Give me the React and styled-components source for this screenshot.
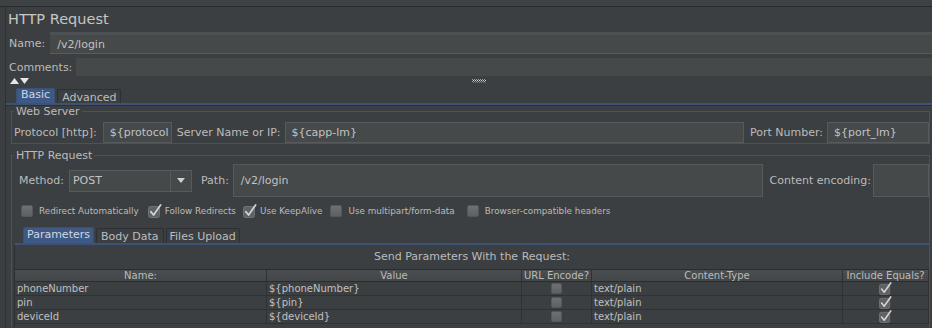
import React from "react";
import styled, { createGlobalStyle } from "styled-components";

const GlobalStyle = createGlobalStyle`
  html, body {
    margin: 0;
    padding: 0;
    background: #3c3f41;
  }
  body {
    font-family: "DejaVu Sans", "Lucida Grande", sans-serif;
    color: #bbbbbb;
  }
`;

const Window = styled.div`
  width: 932px;
  height: 328px;
  overflow: hidden;
  background: #3c3f41;
  display: flex;
  flex-direction: column;
`;

const TopStrip = styled.div`
  flex: none;
  height: 6px;
  background: #3e4245;
  border-bottom: 1px solid #27292b;
`;

const Panel = styled.div`
  flex: 1;
  margin-left: 5px;
  border-left: 1px solid #2f3133;
  display: flex;
  flex-direction: column;
  min-height: 0;
`;

const Title = styled.div`
  height: 25px;
  line-height: 24px;
  padding-left: 2px;
  font-size: 14.5px;
  color: #c6c6c6;
`;

const Row = styled.div`
  display: flex;
  align-items: center;
  flex: none;
  height: ${(p) => p.$h}px;
  margin-top: ${(p) => p.$mt || 0}px;
  padding-left: ${(p) => p.$pl || 0}px;
`;

const Label = styled.span`
  font-size: 11px;
  white-space: nowrap;
  color: #bbbbbb;
  margin-right: ${(p) => p.$mr ?? 5}px;
  margin-left: ${(p) => p.$ml || 0}px;
`;

const Field = styled.div`
  box-sizing: border-box;
  height: ${(p) => p.$h || 21}px;
  ${(p) => (p.$w ? `width: ${p.$w}px; flex: none;` : "flex: 1;")}
  background: #45494a;
  border: 1px solid #575a5c;
  font-size: 11px;
  color: #c2c2c2;
  padding-left: ${(p) => p.$pad ?? 6}px;
  display: flex;
  align-items: center;
  white-space: nowrap;
  overflow: hidden;
`;

const NameField = styled(Field)`
  border-width: 3px 0 1px 0;
  border-color: #4d5153 transparent #585b5d transparent;
  padding-left: 7px;
`;

const CommentsField = styled(Field)`
  border: none;
`;

const ArrowRow = styled.div`
  flex: none;
  height: 10px;
  display: flex;
  align-items: center;
  padding-left: 4px;
`;

const Grip = styled.svg`
  margin-left: 442px;
`;

const Tabs = styled.div`
  flex: none;
  display: flex;
  align-items: flex-end;
  gap: 2px;
  padding-left: ${(p) => p.$pl}px;
  height: ${(p) => p.$h}px;
  margin-top: ${(p) => p.$mt || 0}px;
`;

const Tab = styled.div`
  box-sizing: border-box;
  height: ${(p) => p.$h}px;
  padding: ${(p) => (p.$active ? "0" : "2px")} ${(p) => p.$px}px 0;
  font-size: 11px;
  line-height: ${(p) => p.$h - 3}px;
  color: ${(p) => (p.$active ? "#cfd6e2" : "#bdbdbd")};
  background: ${(p) => (p.$active ? "#3f5985" : "#3c3f41")};
  border: 1px solid ${(p) => (p.$active ? "#3a5078" : "#2d2f31")};
  border-bottom: none;
  border-radius: 2px 2px 0 0;
  white-space: nowrap;
`;

const TabBody = styled.div`
  flex: 1;
  display: flex;
  flex-direction: column;
  border-top: 2px solid #3d5274;
  box-shadow: inset 0 1px 0 #2d3035;
  min-height: 0;
`;

const Group = styled.fieldset`
  margin: ${(p) => p.$mt || 0}px 2px 0 5px;
  padding: 0 0 0 2px;
  border: 1px solid #4f5254;
  border-bottom-color: ${(p) => p.$bb || "#4f5254"};
  min-width: 0;
  display: flex;
  flex-direction: column;
  ${(p) => (p.$grow ? "flex: 1; min-height: 0;" : "")}
`;

const Legend = styled.legend`
  font-size: 11px;
  line-height: 13px;
  padding: 0 2px;
  margin-left: 0;
  color: #bbbbbb;
`;

const Combo = styled.div`
  box-sizing: border-box;
  width: 123px;
  height: 22px;
  flex: none;
  background: #45494a;
  border: 1px solid #575a5c;
  display: flex;
  align-items: stretch;
  font-size: 11px;
`;

const ComboText = styled.div`
  flex: 1;
  display: flex;
  align-items: center;
  padding-left: 3px;
  color: #c4c4c4;
`;

const ComboButton = styled.div`
  width: 20px;
  border-left: 1px solid #575a5c;
  display: flex;
  align-items: center;
  justify-content: center;
`;

const Checks = styled.div`
  flex: none;
  display: flex;
  align-items: center;
  height: 14px;
  margin-top: 7px;
  padding-left: 7px;
`;

const CheckItem = styled.label`
  display: flex;
  align-items: center;
  margin-right: ${(p) => p.$mr}px;
`;

const CheckText = styled.span`
  font-size: 8.8px;
  color: #bbbbbb;
  margin-left: ${(p) => (p.$on ? 3 : 6)}px;
  white-space: nowrap;
`;

const Box = styled.span`
  display: inline-block;
  box-sizing: border-box;
  width: ${(p) => p.$s || 12}px;
  height: ${(p) => p.$s || 12}px;
  border-radius: 2px;
  background: linear-gradient(#6e7173, #5e6163);
  border: 1px solid #55585a;
`;

const ParamsArea = styled.div`
  flex: 1;
  display: flex;
  flex-direction: column;
  min-height: 0;
`;

const ParamsBody = styled.div`
  flex: 1;
  border-top: 2px solid #3d5274;
  border-left: 1px solid #2c2e30;
  display: flex;
  flex-direction: column;
  min-height: 0;
`;

const Caption = styled.div`
  height: 16px;
  margin-top: 4px;
  text-align: center;
  font-size: 11px;
  line-height: 16px;
  color: #bbbbbb;
`;

const Grid = styled.div`
  margin-top: 4px;
  display: grid;
  grid-template-columns: 252px 255px 70px 251px 1fr;
`;

const HeadCell = styled.div`
  box-sizing: border-box;
  height: 13px;
  border-top: 1px solid #2a2c2e;
  border-bottom: 1px solid #2a2c2e;
  border-right: 1px solid #2f3133;
  background: linear-gradient(#4a4e50, #424648);
  font-size: 10px;
  line-height: 12px;
  text-align: center;
  color: #bbbbbb;
  white-space: nowrap;
  overflow: hidden;
`;

const Cell = styled.div`
  box-sizing: border-box;
  height: 14px;
  border-bottom: 1px solid #2f3133;
  border-right: 1px solid #2f3133;
  font-size: 10px;
  line-height: 13px;
  padding-left: ${(p) => (p.$center ? 0 : 2)}px;
  color: #c0c0c0;
  display: flex;
  align-items: center;
  justify-content: ${(p) => (p.$center ? "center" : "flex-start")};
  white-space: nowrap;
  overflow: hidden;
`;

const CheckMark = ({ size = 14 }) => (
  <svg width={size} height={size} viewBox="0 0 14 14" style={{ display: "block" }}>
    <rect x="0.5" y="2.5" width="11" height="11" rx="2" fill="#5f6264" stroke="#707375" />
    <path d="M2.8 7.6 L5.6 11 L12.6 1" fill="none" stroke="#d4d4d4" strokeWidth="1.7" strokeLinecap="round" strokeLinejoin="round" />
  </svg>
);

const Arrows = () => (
  <svg width="20" height="6" viewBox="0 0 20 6">
    <path d="M0 6 L4.5 0 L9 6 Z" fill="#e6e6e6" />
    <path d="M10 0 L19 0 L14.5 6 Z" fill="#e6e6e6" />
  </svg>
);

const params = [
  { name: "phoneNumber", value: "${phoneNumber}" },
  { name: "pin", value: "${pin}" },
  { name: "deviceId", value: "${deviceId}" },
];

const checks = [
  { text: "Redirect Automatically", on: false, mr: 9 },
  { text: "Follow Redirects", on: true, mr: 7 },
  { text: "Use KeepAlive", on: true, mr: 8 },
  { text: "Use multipart/form-data", on: false, mr: 12 },
  { text: "Browser-compatible headers", on: false, mr: 0 },
];

export default function App() {
  return (
    <Window>
      <GlobalStyle />
      <TopStrip />
      <Panel>
        <Title>HTTP Request</Title>

        <Row $h={22} $pl={3}>
          <Label $mr={5}>Name:</Label>
          <NameField $h={22}>/v2/login</NameField>
        </Row>

        <Row $h={18} $mt={4} $pl={3}>
          <Label $mr={4}>Comments:</Label>
          <CommentsField $h={18} />
        </Row>

        <ArrowRow>
          <Arrows />
          <Grip width="14" height="4" viewBox="0 0 14 4">
            {[0, 2, 4, 6, 8, 10, 12].map((x) => (
              <g key={x}>
                <rect x={x} y="0" width="1" height="1" fill="#9a9a9a" />
                <rect x={x + 1} y="1" width="1" height="1" fill="#cfcfcf" />
                <rect x={x} y="2" width="1" height="1" fill="#9a9a9a" />
                <rect x={x + 1} y="3" width="1" height="1" fill="#777" />
              </g>
            ))}
          </Grip>
        </ArrowRow>

        <Tabs $pl={10} $h={16} $mt={1}>
          <Tab $active $h={15} $px={4}>Basic</Tab>
          <Tab $h={14} $px={4}>Advanced</Tab>
        </Tabs>

        <TabBody>
          <Group>
            <Legend>Web Server</Legend>
            <Row $h={21} $mt={4}>
              <Label $mr={6}>Protocol [http]:</Label>
              <Field $w={69} $pad={6}>{"${protocol"}</Field>
              <Label $ml={5} $mr={4}>Server Name or IP:</Label>
              <Field $pad={6}>{"${capp-lm}"}</Field>
              <Label $ml={6} $mr={4}>Port Number:</Label>
              <Field $w={102} $pad={6}>{"${port_lm}"}</Field>
            </Row>
          </Group>

          <Group $mt={5} $grow $bb="transparent">
            <Legend>HTTP Request</Legend>
            <Row $h={33} $mt={2} $pl={5}>
              <Label $mr={5}>Method:</Label>
              <Combo>
                <ComboText>POST</ComboText>
                <ComboButton>
                  <svg width="8" height="5" viewBox="0 0 8 5">
                    <path d="M0 0 L8 0 L4 5 Z" fill="#cfcfcf" />
                  </svg>
                </ComboButton>
              </Combo>
              <Label $ml={9} $mr={4}>Path:</Label>
              <Field $h={33} $pad={7}>/v2/login</Field>
              <Label $ml={7} $mr={2}>Content encoding:</Label>
              <Field $w={56} $h={33} />
            </Row>

            <Checks>
              {checks.map((c) => (
                <CheckItem key={c.text} $mr={c.mr}>
                  {c.on ? <CheckMark /> : <Box />}
                  <CheckText $on={c.on}>{c.text}</CheckText>
                </CheckItem>
              ))}
            </Checks>

            <ParamsArea>
              <Tabs $pl={9} $h={16} $mt={9}>
                <Tab $active $h={16} $px={3}>Parameters</Tab>
                <Tab $h={15} $px={4}>Body Data</Tab>
                <Tab $h={15} $px={3}>Files Upload</Tab>
              </Tabs>
              <ParamsBody>
                <Caption>Send Parameters With the Request:</Caption>
                <Grid>
                  <HeadCell>Name:</HeadCell>
                  <HeadCell>Value</HeadCell>
                  <HeadCell>URL Encode?</HeadCell>
                  <HeadCell>Content-Type</HeadCell>
                  <HeadCell>Include Equals?</HeadCell>
                  {params.map((p) => (
                    <React.Fragment key={p.name}>
                      <Cell>{p.name}</Cell>
                      <Cell>{p.value}</Cell>
                      <Cell $center>
                        <Box $s={11} />
                      </Cell>
                      <Cell>text/plain</Cell>
                      <Cell $center>
                        <CheckMark size={13} />
                      </Cell>
                    </React.Fragment>
                  ))}
                </Grid>
              </ParamsBody>
            </ParamsArea>
          </Group>
        </TabBody>
      </Panel>
    </Window>
  );
}
